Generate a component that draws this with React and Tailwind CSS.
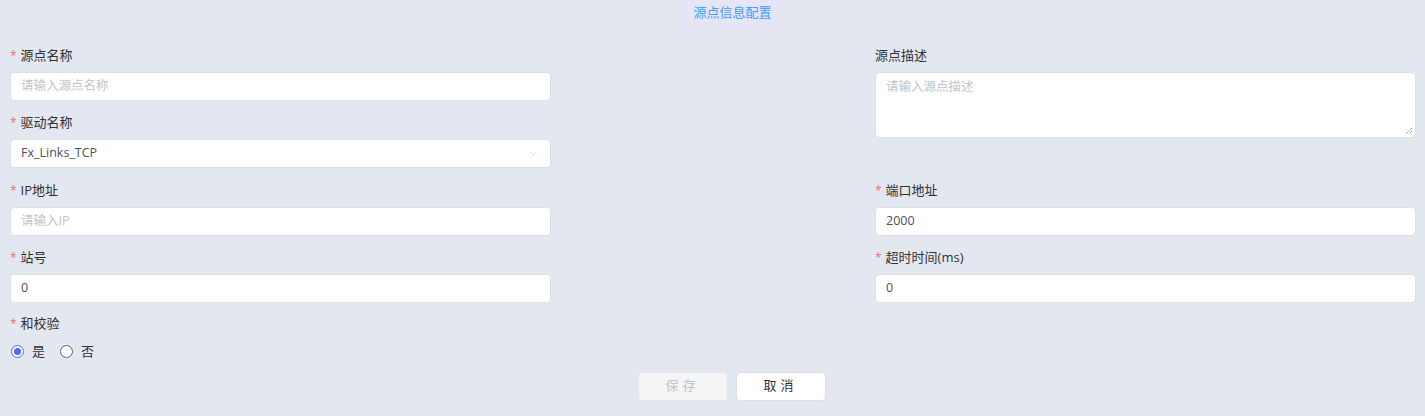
import { ChevronDown } from 'lucide-react'

const font = { fontFamily: '"Open Sans", "Noto Sans CJK SC", sans-serif' }

const Label = ({ text, required }) => (
  <div className="flex items-center h-[20px] text-[13px] text-[#303133]">
    {required && <span className="text-[#f56c6c] mr-[4px] text-[12px]">*</span>}
    {text}
  </div>
)

const Input = ({ placeholder, value }) => (
  <div className="mt-[6px] h-[29px] bg-white border border-[#dcdfe6] rounded-[4px] flex items-center px-[10px] text-[12.5px]">
    {value ? (
      <span className="text-[#4b4f66]">{value}</span>
    ) : (
      <span className="text-[#c0c4cc]">{placeholder}</span>
    )}
  </div>
)

const Field = ({ label, required, tall, children }) => (
  <div className={`${tall ? 'h-[68px]' : 'h-[67px]'} pt-[3px]`}>
    <Label text={label} required={required} />
    {children}
  </div>
)

const Radio = ({ checked, label }) => (
  <div className="flex items-center gap-[8px] mr-[15px]">
    <span
      className={`w-[13px] h-[13px] rounded-full border flex items-center justify-center bg-white ${
        checked ? 'border-[#4a6cf7]' : 'border-[#606266]'
      }`}
    >
      {checked && <span className="w-[7px] h-[7px] rounded-full bg-[#4a6cf7]" />}
    </span>
    <span className="text-[13px] text-[#303133]">{label}</span>
  </div>
)

export default function App() {
  return (
    <div className="w-[1425px] h-[416px] bg-[#e3e7f0] overflow-hidden" style={font}>
      {/* header */}
      <div className="h-[31px] border-b border-[#e4e6ec] flex justify-center pl-[40px]">
        <div className="w-[107px] h-full flex justify-center pt-[3px] bg-[#e6e5f6] text-[13px] leading-[18px] text-[#409eff]">
          源点信息配置
        </div>
      </div>

      <div className="flex justify-between pl-[10px] pr-[9px] pt-[12px]">
        {/* left column */}
        <div className="w-[541px]">
          <Field label="源点名称" required>
            <Input placeholder="请输入源点名称" />
          </Field>
          <Field label="驱动名称" required tall>
            <div className="mt-[6px] h-[29px] bg-white border border-[#dcdfe6] rounded-[4px] flex items-center justify-between px-[10px] text-[12.5px]">
              <span className="text-[#4b4f66]">Fx_Links_TCP</span>
              <ChevronDown size={13} strokeWidth={1.2} className="text-[#c0c4cc]" />
            </div>
          </Field>
          <Field label="IP地址" required>
            <Input placeholder="请输入IP" />
          </Field>
          <Field label="站号" required>
            <Input value="0" />
          </Field>
          <div className="pt-[2px]">
            <Label text="和校验" required />
            <div className="flex items-center mt-[8px] pl-[1px]">
              <Radio checked label="是" />
              <Radio label="否" />
            </div>
          </div>
        </div>

        {/* right column */}
        <div className="w-[541px]">
          <div className="h-[135px] pt-[3px]">
            <Label text="源点描述" />
            <div className="relative mt-[6px] h-[66px] bg-white border border-[#dcdfe6] rounded-[4px] px-[10px] pt-[5px] text-[12.5px] text-[#c0c4cc]">
              请输入源点描述
              <svg className="absolute right-[2px] bottom-[2px]" width="9" height="9" viewBox="0 0 9 9">
                <path d="M8 2L2 8M8 5L5 8" stroke="#777" strokeWidth="1" strokeDasharray="1 1" />
              </svg>
            </div>
          </div>
          <Field label="端口地址" required>
            <Input value="2000" />
          </Field>
          <Field label="超时时间(ms)" required>
            <Input value="0" />
          </Field>
        </div>
      </div>

      {/* buttons */}
      <div className="flex justify-center gap-[8px] mt-[10px] pl-[38px]">
        <button className="w-[90px] h-[29px] rounded-[4px] border border-[#e4e7ed] bg-[#f5f5f5] text-[13px] text-[#c0c4cc] tracking-[4px]">
          保存
        </button>
        <button className="w-[90px] h-[29px] rounded-[4px] border border-[#dcdfe6] bg-white text-[13px] text-[#303133] tracking-[4px]">
          取消
        </button>
      </div>
    </div>
  )
}
